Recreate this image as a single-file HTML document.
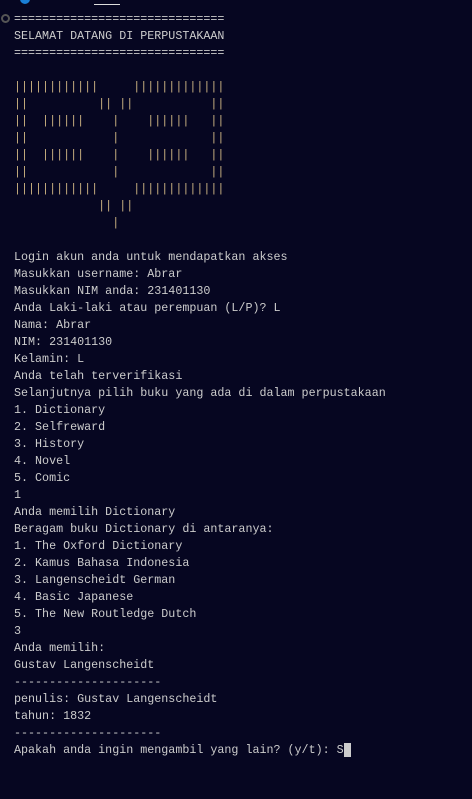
<!DOCTYPE html>
<html><head><meta charset="utf-8"><style>
html,body{margin:0;padding:0;background:#060621;width:472px;height:799px;overflow:hidden}
pre{position:absolute;left:14px;top:11px;margin:0;font-family:"Liberation Mono",monospace;font-size:11.7px;line-height:17px;color:#cccccc;white-space:pre}
.a{color:#c8b080}
.cur{background:#cccccc;color:#060621}
</style></head><body>
<div style="position:absolute;left:20px;top:-6px;width:10px;height:10px;border-radius:50%;background:#1a7fd6"></div>
<div style="position:absolute;left:94px;top:4px;width:26px;height:1px;background:#ddd"></div>
<div style="position:absolute;left:1px;top:14px;width:5px;height:5px;border-radius:50%;border:2px solid #555"></div>
<pre>==============================
SELAMAT DATANG DI PERPUSTAKAAN
==============================

<span class="a">||||||||||||     |||||||||||||
||          || ||           ||
||  ||||||    |    ||||||   ||
||            |             ||
||  ||||||    |    ||||||   ||
||            |             ||
||||||||||||     |||||||||||||
            || ||
              |</span>

Login akun anda untuk mendapatkan akses
Masukkan username: Abrar
Masukkan NIM anda: 231401130
Anda Laki-laki atau perempuan (L/P)? L
Nama: Abrar
NIM: 231401130
Kelamin: L
Anda telah terverifikasi
Selanjutnya pilih buku yang ada di dalam perpustakaan
1. Dictionary
2. Selfreward
3. History
4. Novel
5. Comic
1
Anda memilih Dictionary
Beragam buku Dictionary di antaranya:
1. The Oxford Dictionary
2. Kamus Bahasa Indonesia
3. Langenscheidt German
4. Basic Japanese
5. The New Routledge Dutch
3
Anda memilih:
Gustav Langenscheidt
---------------------
penulis: Gustav Langenscheidt
tahun: 1832
---------------------
Apakah anda ingin mengambil yang lain? (y/t): S<span class="cur"> </span></pre>
</body></html>
